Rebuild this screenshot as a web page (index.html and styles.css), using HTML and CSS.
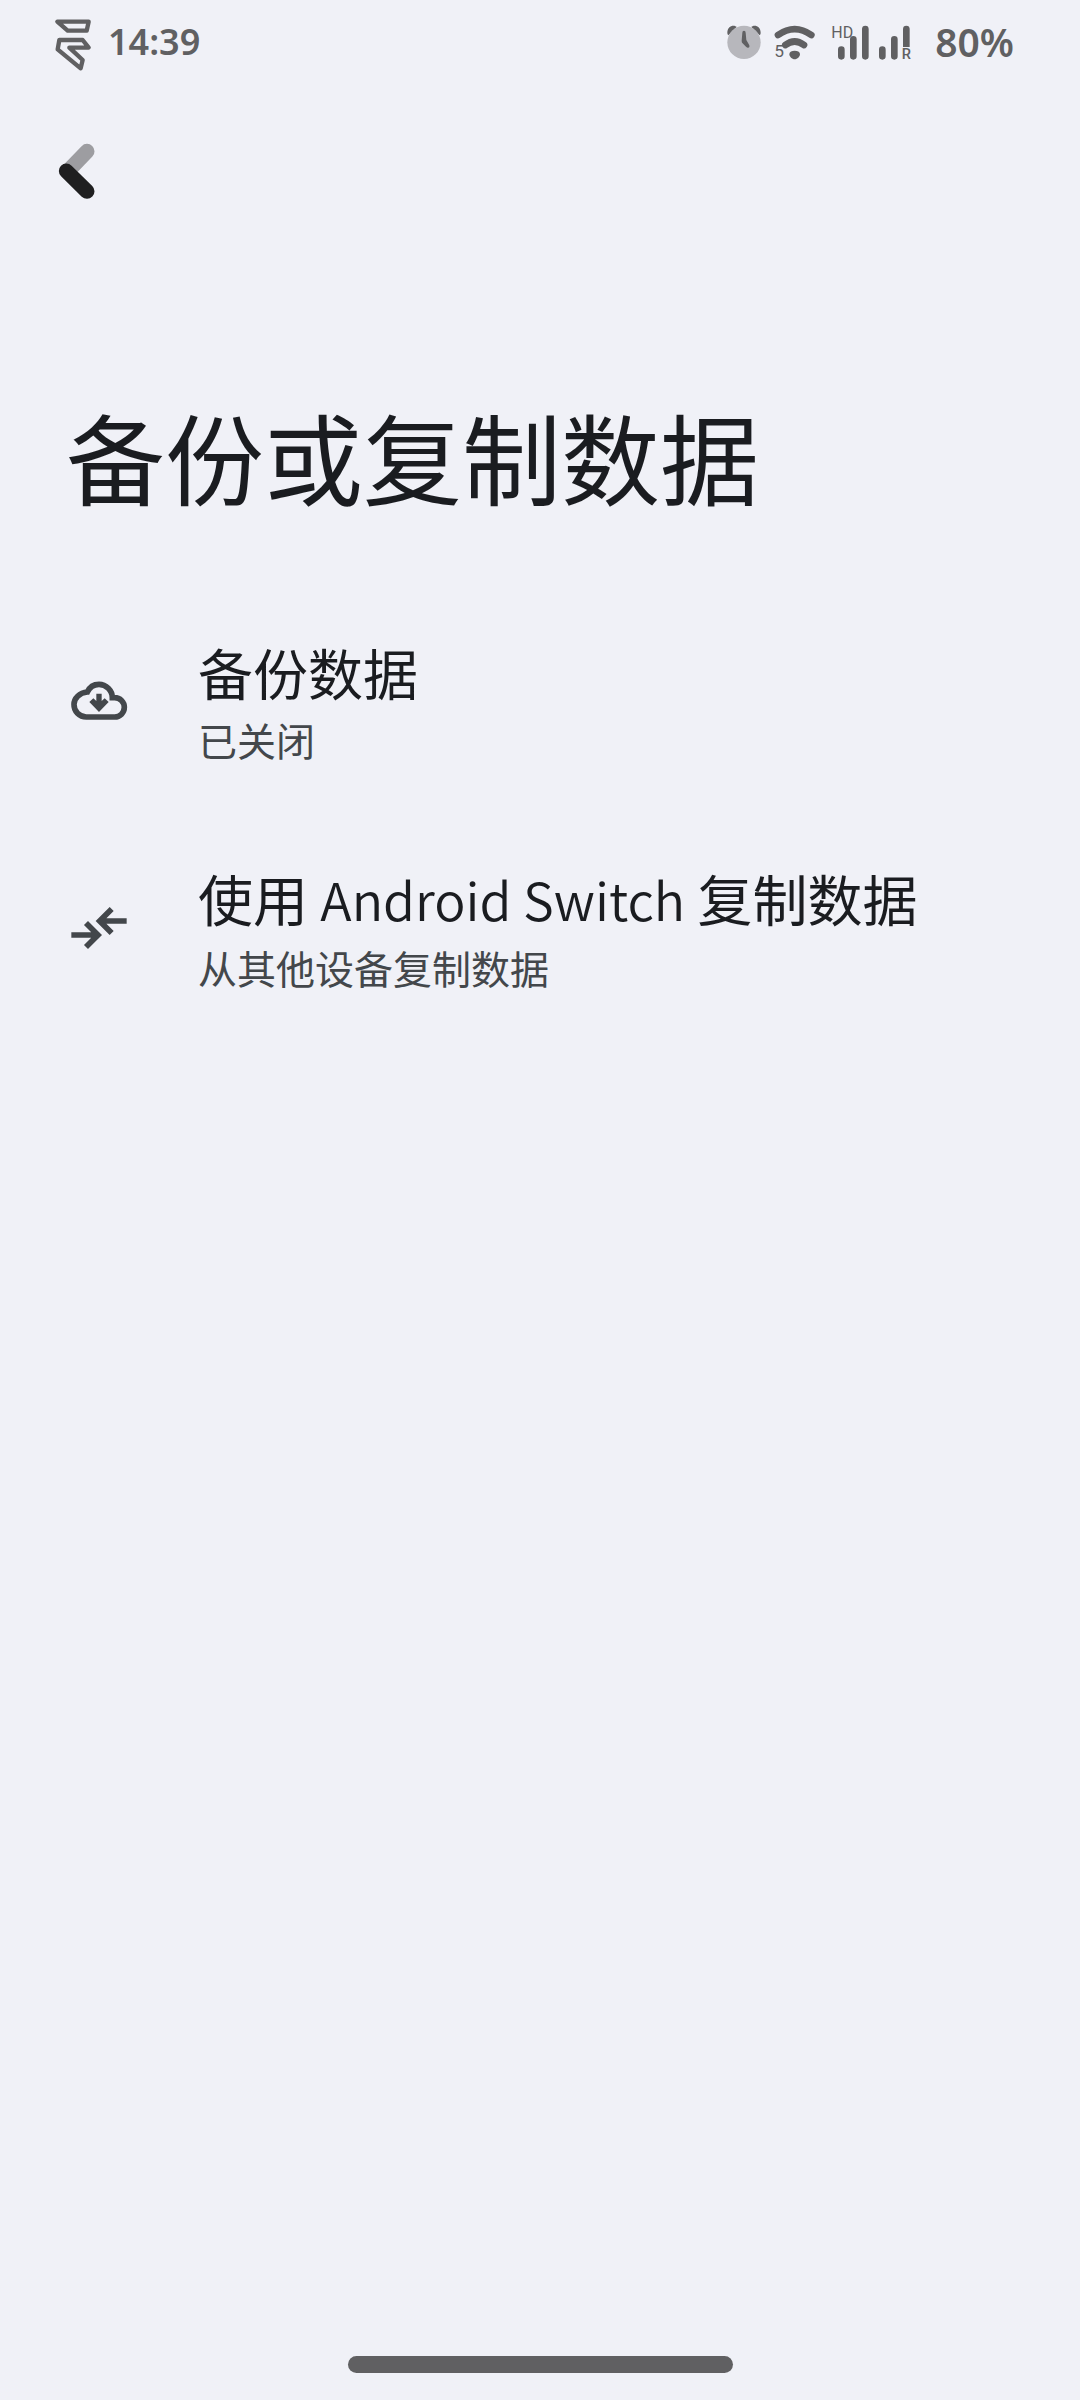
FILE: index.html
```html
<!DOCTYPE html>
<html lang="zh-CN">
<head>
    <meta charset="UTF-8">
    <meta name="viewport" content="width=device-width, initial-scale=1.0">
    <title>备份或复制数据</title>
    <link rel="stylesheet" href="styles.css">
</head>
<body>
    <div class="app">
        <!-- 状态栏 -->
        <div class="status">
            <div class="status-left">
                <svg class="logo" width="38" height="54" viewBox="0 0 114 162">
                    <path d="M10 20H104L98 47H41ZM16 75H86L104 98H46L86 135L80 160L11 103Z"/>
                </svg>
                <span class="time">14:39</span>
            </div>
            <div class="status-right">
                <svg width="34" height="36" viewBox="0 0 102 108">
                    <path class="dark" d="M1 27C1 12 10 5 19 5C24 5 27 7 29 9L4 34Q1 31 1 27ZM101 27C101 12 92 5 83 5C78 5 75 7 73 9L98 34Q101 31 101 27Z"/>
                    <circle class="pale" cx="51" cy="55" r="50"/>
                    <path class="dark" d="M46 26Q46 20 51 20Q56 20 56 26L58 48L67 64Q69 71 64 71Q61 72 57 68L46 57Q44 55 44 50Z"/>
                </svg>
                <svg class="wifi" width="42" height="36" viewBox="0 0 126 108">
                    <path class="line" d="M12 33Q62 -2 112 33M34 63Q62 42 90 63"/>
                    <path class="dark" d="M46 90C47 83 53 80 62 80S77 83 78 90C78 98 70 106 62 106S46 98 46 90Z"/>
                    <text class="num" x="1" y="99">5</text>
                </svg>
                <svg class="signal" width="80" height="36" viewBox="0 0 240 108">
                    <path class="bar" d="M28 77V97M64 46V97M100 15V97M151 77V97M187 46V97"/>
                    <path class="dark" d="M213 69V15A10 10 0 0 1 233 15V69Z"/>
                    <text class="num hd" x="-2" y="42">HD</text>
                    <text class="num roam" x="209" y="106">R</text>
                </svg>
                <span class="power">80%</span>
            </div>
        </div>

        <button class="back" type="button" aria-label="返回">
            <svg width="38" height="58" viewBox="0 0 114 174">
                <path class="back-up" d="M87 25L33 81"/>
                <path class="back-down" d="M25 84L87 145"/>
            </svg>
        </button>

        <h1>备份或复制数据</h1>

        <div class="list">
            <a class="item" href="#">
                <svg class="icon" width="56" height="56" viewBox="63 124 168 168">
                    <path class="cloud" d="M109 256A37 37 0 0 1 72 218C72 200 88 183 112 181C118 168 131 158 147 158C168 158 187 176 187 198H194A29 29 0 0 1 194 256Z"/>
                    <path class="arrow" d="M139 186H155V208L164 200L176 211L147 241L118 211L130 200L139 208Z"/>
                </svg>
                <span class="text">
                    <span class="name">备份数据</span>
                    <span class="desc">已关闭</span>
                </span>
            </a>
            <a class="item" href="#">
                <svg class="icon" width="56" height="56" viewBox="63 148 168 168">
                    <path class="cloud" d="M64 253H143M108 217L144 253L108 289M230 211H151M185 175L149 211L185 247"/>
                </svg>
                <span class="text">
                    <span class="name">使用 <span class="en">Android Switch</span> 复制数据</span>
                    <span class="desc">从其他设备复制数据</span>
                </span>
            </a>
        </div>

        <div class="home"></div>
    </div>
</body>
</html>
```
FILE: styles.css
```css
*{
    box-sizing: border-box;
}
body{
    margin: 0;
    background-color: #f0f1f7;
    color: #1a1c20;
    font-family: "Noto Sans CJK SC", sans-serif;
}
svg{
    display: block;
    flex: none;
    overflow: visible;
}
.app{
    min-height: 100vh;
    display: flex;
    flex-direction: column;
}

/* 状态栏 */
.status{
    height: 83px;
    padding: 0 66px 0 54px;
    display: flex;
    justify-content: space-between;
    align-items: center;
    color: #606062;
    font-family: "Noto Sans", sans-serif;
    font-size: 39px;
    font-weight: 600;
    line-height: 52px;
}
.status-left,.status-right{
    display: flex;
    align-items: center;
}
.time{
    margin-left: 16px;
    font-size: 36px;
}
.power{
    margin-left: 23px;
}
.logo{
    fill: none;
    stroke: #606062;
    stroke-width: 13;
    stroke-linejoin: round;
}
.dark{
    fill: #606062;
}
.pale{
    fill: #b7b7bc;
}
.wifi{
    margin-left: 13px;
}
.signal{
    margin-left: 16px;
}
.line,.bar{
    fill: none;
    stroke: #606062;
    stroke-width: 20;
    stroke-linecap: round;
}
.num{
    fill: #606062;
    font-family: Roboto, sans-serif;
    font-size: 52px;
    font-weight: 400;
}
.hd{
    font-size: 48px;
}
.roam{
    font-size: 44px;
    font-weight: 500;
}

.back{
    align-self: flex-start;
    margin: 60px 0 0 58px;
    padding: 0;
    border: 0;
    background: none;
    cursor: pointer;
}
.back path{
    fill: none;
    stroke-width: 45;
    stroke-linecap: round;
}
.back .back-up{
    stroke: #9d9da1;
}
.back .back-down{
    stroke: #1f1f20;
}

h1{
    margin: 182px 66px 0;
    font-size: 99px;
    font-weight: 400;
    line-height: 144px;
}

.list{
    margin-top: 60px;
}
.item{
    display: flex;
    align-items: center;
    min-height: 227px;
    padding: 0 71px;
    color: inherit;
    text-decoration: none;
}
.icon{
    margin-right: 71px;
}
.name,.desc{
    display: block;
}
.name{
    font-size: 55px;
    line-height: 76px;
}
.en{
    font-size: 52px;
    font-weight: 350;
}
.desc{
    color: #43474b;
    font-size: 39px;
    line-height: 60px;
}
.cloud{
    fill: none;
    stroke: #43474b;
    stroke-width: 17;
}
.arrow{
    fill: #43474b;
}

.home{
    width: 385px;
    height: 17px;
    margin: auto auto 27px;
    border-radius: 9px;
    background-color: #606062;
}
```
